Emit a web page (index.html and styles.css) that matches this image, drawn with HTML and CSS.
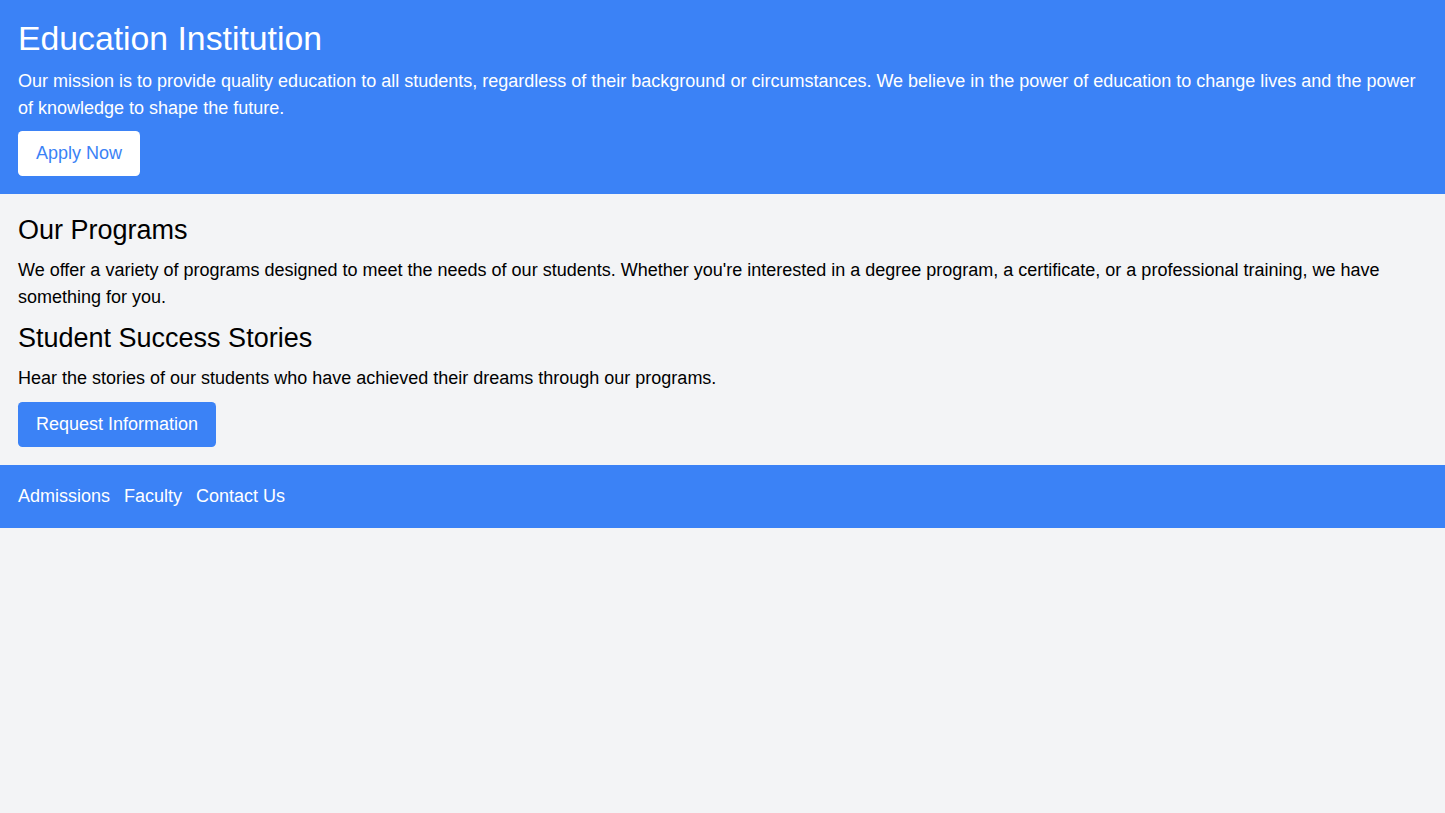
FILE: index.html
```html
<!DOCTYPE html>
<html lang="en">
<head>
<meta charset="utf-8">
<title>Education Institution</title>
<link rel="stylesheet" href="styles.css">
</head>
<body>
<header class="hero">
  <h1 class="hero-title">Education Institution</h1>
  <p class="hero-text">Our mission is to provide quality education to all students, regardless of their background or circumstances. We believe in the power of education to change lives and the power of knowledge to shape the future.</p>
  <a class="btn btn-white" href="#">Apply Now</a>
</header>
<main class="content">
  <h2 class="section-title">Our Programs</h2>
  <p class="section-text">We offer a variety of programs designed to meet the needs of our students. Whether you're interested in a degree program, a certificate, or a professional training, we have something for you.</p>
  <h2 class="section-title">Student Success Stories</h2>
  <p class="section-text">Hear the stories of our students who have achieved their dreams through our programs.</p>
  <a class="btn btn-blue" href="#">Request Information</a>
</main>
<footer class="footer">
  <nav class="footer-nav">
    <a href="#">Admissions</a>
    <a href="#">Faculty</a>
    <a href="#">Contact Us</a>
  </nav>
</footer>
</body>
</html>
```
FILE: styles.css
```css
html, body {
  margin: 0;
  padding: 0;
}
body {
  background: #f3f4f6;
  font-family: "Liberation Sans", Arial, sans-serif;
  font-size: 18px;
  line-height: 27px;
  color: #000;
}
h1, h2, p {
  margin: 0;
  font-weight: 400;
}
a {
  text-decoration: none;
  color: inherit;
}
.hero {
  background: #3b82f6;
  color: #fff;
  padding: 18px;
}
.hero-title {
  font-size: 33.75px;
  line-height: 40.5px;
  margin-bottom: 9px;
}
.hero-text {
  margin-bottom: 9px;
}
.btn {
  display: inline-block;
  padding: 9px 18px;
  border-radius: 4.5px;
}
.btn-white {
  background: #fff;
  color: #3b82f6;
}
.btn-blue {
  background: #3b82f6;
  color: #fff;
}
.content {
  padding: 18px;
}
.section-title {
  font-size: 27px;
  line-height: 36px;
  margin-bottom: 9px;
}
.section-text {
  margin-bottom: 9.5px;
}
.footer {
  background: #3b82f6;
  color: #fff;
  padding: 18px;
}
.footer-nav {
  display: flex;
  gap: 14px;
}
```
